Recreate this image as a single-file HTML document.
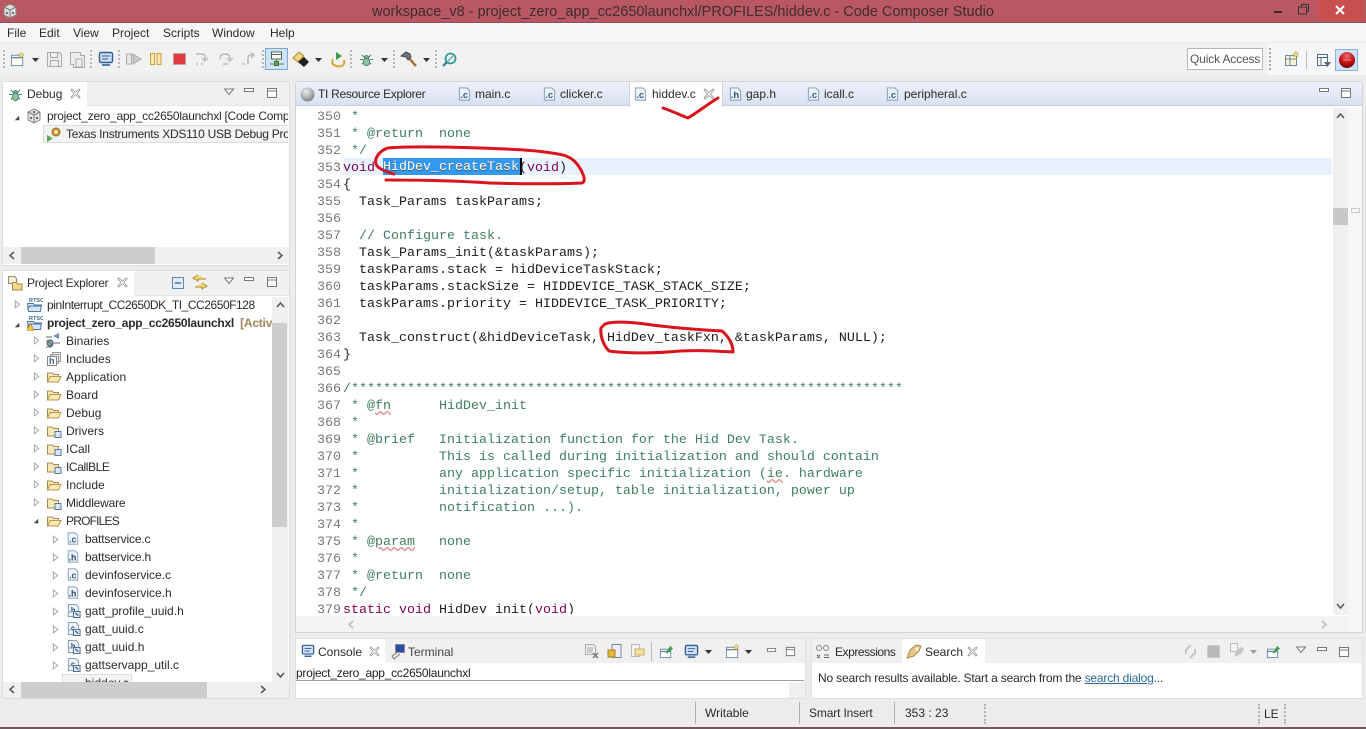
<!DOCTYPE html>
<html><head><meta charset="utf-8"><style>
html,body{margin:0;padding:0;width:1366px;height:729px;overflow:hidden;background:#ececec}
*{box-sizing:border-box}
body{font:12px "Liberation Sans",sans-serif;color:#2b2b2b;position:relative}
.a,.t,svg.i{position:absolute}
.t{white-space:nowrap;line-height:16px}
pre{margin:0;font:13.33px/17px "Liberation Mono",monospace;position:absolute}
.c{color:#3f7f5f}.k{color:#7f0055}
</style></head><body>
<svg width="0" height="0" style="position:absolute"><defs>
<symbol id="folder" viewBox="0 0 16 16"><path d="M1.5 13V4h5l1 1.500h5V8" fill="#f8e8b8" stroke="#a88a50"/><path d="M1.500 13l2.500-5.500h11l-2.500 5.500z" fill="#fbe9b0" stroke="#b89650"/></symbol>
<symbol id="pfolder" viewBox="0 0 16 16"><path d="M1.500 13V4h5l1 1.500h5V13z" fill="#f8e8b8" stroke="#a88a50"/><rect x="9" y="8.500" width="6" height="6" fill="#dbe6f4" stroke="#5a7a9c"/></symbol>
<symbol id="fc" viewBox="0 0 16 16"><path d="M2.500 1.500h8l3 3v10h-11z" fill="#eef3f9" stroke="#7d99b5"/><text x="3.500" y="12.500" font-family="Liberation Sans" font-size="10" font-weight="bold" fill="#2a5a8a">.c</text></symbol>
<symbol id="fh" viewBox="0 0 16 16"><path d="M2.500 1.500h8l3 3v10h-11z" fill="#eef3f9" stroke="#7d99b5"/><text x="3" y="12.500" font-family="Liberation Sans" font-size="10" font-weight="bold" fill="#2a4a7a">.h</text></symbol>
<symbol id="closed" viewBox="0 0 8 10"><path d="M1.500 1l5 4-5 4z" fill="#fff" stroke="#a0a0a0"/></symbol>
<symbol id="open" viewBox="0 0 8 8"><path d="M7 1v6H1z" fill="#444"/></symbol>
<symbol id="x" viewBox="0 0 12 12"><path d="M2 1l4 3.500L10 1l1 1-3.500 4L11 10l-1 1-4-3.500L2 11l-1-1 3.500-4L1 2z" fill="#fff" stroke="#9a9a9a" stroke-width=".9"/></symbol>
<symbol id="min" viewBox="0 0 12 6"><rect x="1.500" y="1.500" width="9" height="3" fill="#fff" stroke="#777"/></symbol>
<symbol id="max" viewBox="0 0 12 12"><path d="M1.500 1.500h9v9h-9zM1.500 4h9" fill="#fff" stroke="#777"/></symbol>
<symbol id="menu" viewBox="0 0 12 8"><path d="M1.500 1h9L6 6.500z" fill="#fff" stroke="#777"/></symbol>
<symbol id="drop" viewBox="0 0 8 4"><path d="M0 0h7L3.500 4z" fill="#333"/></symbol>
<symbol id="bug" viewBox="0 0 16 16"><path d="M3 3l3 3M13 3l-3 3M1 8h3M15 8h-3M3 13l3-2M13 13l-3-2" stroke="#3f7f6f" fill="none"/><circle cx="8" cy="6" r="2.200" fill="#7fb38f" stroke="#3f7f6f"/><ellipse cx="8" cy="10.500" rx="3.500" ry="4" fill="#8fc49f" stroke="#3f7f6f"/></symbol>
<symbol id="link" viewBox="0 0 16 16"><path d="M2.500 1.500h8l3 3v10h-11z" fill="#eef3f9" stroke="#7d99b5"/><text x="3" y="10" font-family="Liberation Sans" font-size="8" font-weight="bold" fill="#2a4a7a">.h</text><rect x="8" y="9" width="7" height="6.500" fill="#dce8f4" stroke="#44688c"/><path d="M10 10.500l3 3" stroke="#224"/></symbol>
<symbol id="linkc" viewBox="0 0 16 16"><path d="M2.500 1.500h8l3 3v10h-11z" fill="#eef3f9" stroke="#7d99b5"/><text x="3" y="10" font-family="Liberation Sans" font-size="8" font-weight="bold" fill="#2a5a8a">.c</text><rect x="8" y="9" width="7" height="6.500" fill="#dce8f4" stroke="#44688c"/><path d="M10 10.500l3 3" stroke="#224"/></symbol>
<symbol id="monitor" viewBox="0 0 16 16"><rect x="1.500" y="1.500" width="13" height="10" rx="1.500" fill="#cfe0f2" stroke="#2f5f97" stroke-width="1.400"/><path d="M4 5h8M4 8h6" stroke="#2f5f97"/><path d="M4 14h8" stroke="#2f5f97" stroke-width="1.600"/></symbol>
<symbol id="newwin" viewBox="0 0 16 16"><rect x="1.500" y="3.500" width="12" height="11" fill="#fff" stroke="#6f8aa8"/><path d="M1.500 6h12" stroke="#6f8aa8" stroke-width="1.500"/><path d="M12 0l1 2 2 .5-1.500 1.500.5 2-2-1-2 1 .5-2L9 2.500l2-.5z" fill="#f5dc7a" stroke="#b39540" stroke-width=".5"/></symbol>
<symbol id="pin" viewBox="0 0 16 16"><rect x="1.500" y="5.500" width="11" height="9" fill="#fff" stroke="#6f8aa8"/><path d="M1.500 8h11" stroke="#6f8aa8" stroke-width="1.500"/><path d="M7 9l3-4 2-3 3 3-3 2-3 3z" fill="#3f9f4f"/></symbol>
</defs></svg>

<!-- Title bar -->
<div class="a" style="left:0;top:0;width:1366px;height:23px;background:#b95863;border-bottom:1px solid #8a5058"></div>
<svg class="i" style="left:2px;top:3px" width="16" height="16" viewBox="0 0 16 16"><path d="M8 1l6 3v8l-6 3-6-3V4z" fill="#ddd" stroke="#888"/><path d="M2 4l6 3 6-3M8 7v8" stroke="#777" fill="none"/><circle cx="5" cy="10" r="1" fill="#555"/><circle cx="11" cy="10" r="1" fill="#555"/></svg>
<div class="t" style="left:372px;top:4px;font-size:14.500px;color:#3f2c30">workspace_v8 - project_zero_app_cc2650launchxl/PROFILES/hiddev.c - Code Composer Studio</div>
<div class="a" style="left:1274px;top:11px;width:8px;height:2px;background:#333"></div>
<svg class="i" style="left:1298px;top:4px" width="12" height="11"><path d="M3.500 2.500V.5h7v7h-2M.5 3h8v7h-8z" fill="none" stroke="#333"/></svg>
<div class="a" style="left:1318px;top:0;width:45px;height:20px;background:#c9504f"></div>
<svg class="i" style="left:1335px;top:5px" width="11" height="10"><path d="M1 1l8 8M9 1l-8 8" stroke="#fff" stroke-width="2"/></svg>

<!-- Menu -->
<div class="a" style="left:0;top:23px;width:1366px;height:20px;background:#f5f6f7;border-bottom:1px solid #ebebeb"></div>
<div class="t" style="left:7px;top:25px">File</div>
<div class="t" style="left:39px;top:25px">Edit</div>
<div class="t" style="left:73px;top:25px">View</div>
<div class="t" style="left:112px;top:25px">Project</div>
<div class="t" style="left:163px;top:25px">Scripts</div>
<div class="t" style="left:212px;top:25px">Window</div>
<div class="t" style="left:270px;top:25px">Help</div>

<!-- Toolbar -->
<div class="a" style="left:0;top:43px;width:1268px;height:32px;background:#f1f1f1"></div>
<div class="a" style="left:1268px;top:43px;width:98px;height:32px;background:#f6f7f8"></div>
<div class="a" style="left:3px;top:50px;height:18px;border-left:2px dotted #b8b8b8"></div>
<svg class="i" style="left:9px;top:52px" width="17" height="15"><use href="#newwin"/></svg>
<svg class="i" style="left:32px;top:58px" width="8" height="4"><use href="#drop"/></svg>
<svg class="i" style="left:47px;top:52px" width="15" height="15"><path d="M.5.5h12l2 2v12H.5zM3.500.5v5h7v-5M3.500 14.500v-6h8v6" fill="#eee" stroke="#aaa"/></svg>
<svg class="i" style="left:70px;top:52px" width="16" height="16"><path d="M.5.5h10v3h4v12h-11v-3h-3z" fill="#eee" stroke="#aaa"/><path d="M6 7h6v8H6z" fill="none" stroke="#aaa"/></svg>
<div class="a" style="left:90px;top:50px;height:18px;border-left:2px dotted #b8b8b8"></div>
<svg class="i" style="left:98px;top:51px" width="16" height="16"><use href="#monitor"/></svg>
<div class="a" style="left:118px;top:50px;height:18px;border-left:2px dotted #b8b8b8"></div>
<svg class="i" style="left:126px;top:53px" width="16" height="12"><path d="M.5 1h5v10h-5z" fill="#e8e8e8" stroke="#aaa"/><path d="M7 1l8 5-8 5z" fill="#c8c8c8" stroke="#aaa"/></svg>
<svg class="i" style="left:150px;top:53px" width="12" height="12"><path d="M.5.5h4v11h-4zM7 .5h4v11H7z" fill="#fbe8a8" stroke="#c8a040"/></svg>
<svg class="i" style="left:173px;top:53px" width="13" height="12"><rect x=".5" y=".5" width="12" height="11" fill="#e03a3e" stroke="#c0a0a0"/></svg>
<svg class="i" style="left:195px;top:52px" width="15" height="14"><path d="M1 2h6q3 0 3 3v3M7 6l3 3 3-3M1 12h2M6 12h2" fill="none" stroke="#bbb" stroke-width="1.500"/></svg>
<svg class="i" style="left:218px;top:52px" width="15" height="14"><path d="M2 7q0-5 5-5t5 5M9 6l3 3 3-3M5 12h5" fill="none" stroke="#bbb" stroke-width="1.500"/></svg>
<svg class="i" style="left:241px;top:52px" width="15" height="14"><path d="M7 12V6q0-3 3-3h2M10 1l3 2-3 3M1 12h3" fill="none" stroke="#bbb" stroke-width="1.500"/></svg>
<div class="a" style="left:262px;top:50px;height:18px;border-left:2px dotted #b8b8b8"></div>
<div class="a" style="left:265px;top:48px;width:23px;height:22px;background:#cfe3f7;border:1px solid #7aa8d8"></div>
<svg class="i" style="left:270px;top:51px" width="14" height="16"><path d="M1.500 1h10v7h-10zM1.500 3.500h10" fill="#fff" stroke="#486a4a"/><path d="M6.500 8v4M0 13h14" stroke="#5a8a4a"/><rect x="4.500" y="10.500" width="4" height="4" fill="#6aa84f" stroke="#3f6f3f"/></svg>
<svg class="i" style="left:292px;top:51px" width="18" height="17"><path d="M1 7l6-6 5 4-6 6z" fill="#f4d67a" stroke="#a88a30"/><path d="M6 11l6-5 5 5-5 5z" fill="#222"/></svg>
<svg class="i" style="left:315px;top:58px" width="8" height="4"><use href="#drop"/></svg>
<svg class="i" style="left:330px;top:51px" width="16" height="18"><path d="M6 1l6 4-6 4z" fill="#3f9f4f"/><path d="M3 8q-2 4 1 6t8 1q3-2 2-6" fill="none" stroke="#d8a838" stroke-width="2"/></svg>
<div class="a" style="left:350px;top:50px;height:18px;border-left:2px dotted #b8b8b8"></div>
<svg class="i" style="left:359px;top:52px" width="15" height="15"><use href="#bug"/></svg>
<svg class="i" style="left:381px;top:58px" width="8" height="4"><use href="#drop"/></svg>
<div class="a" style="left:393px;top:50px;height:18px;border-left:2px dotted #b8b8b8"></div>
<svg class="i" style="left:400px;top:51px" width="17" height="16"><path d="M8 6l8 9" stroke="#a8763a" stroke-width="2.500"/><path d="M1 5l5-4 4 2 1 3-3 3-2-3z" fill="#6a7a88" stroke="#445"/></svg>
<svg class="i" style="left:423px;top:58px" width="8" height="4"><use href="#drop"/></svg>
<div class="a" style="left:435px;top:50px;height:18px;border-left:2px dotted #b8b8b8"></div>
<svg class="i" style="left:442px;top:52px" width="15" height="15"><circle cx="8.500" cy="6.500" r="5" fill="none" stroke="#2f9a9a" stroke-width="1.800"/><path d="M5 10l-4 4" stroke="#2f7f9a" stroke-width="2.200"/><path d="M6 9l5-5" stroke="#2f9a9a"/></svg>

<div class="a" style="left:1187px;top:48px;width:76px;height:22px;background:#fff;border:1px solid #b5b5b5"></div>
<div class="t" style="left:1190px;top:51px;color:#555;letter-spacing:-.15px">Quick Access</div>
<div class="a" style="left:1269px;top:48px;height:22px;border-left:2px dotted #a8a8a8"></div>
<svg class="i" style="left:1284px;top:51px" width="16" height="16"><path d="M1.500 4.500h11v10h-11zM1.500 8h11M6 4.500v10" fill="#f8f4d8" stroke="#6f8aa0"/><path d="M12 0l1 2 2 .5-1.500 1.500.5 2-2-1-2 1 .5-2L9 2.500l2-.5z" fill="#f5dc7a" stroke="#b39540" stroke-width=".5"/></svg>
<div class="a" style="left:1306px;top:51px;height:18px;border-left:1px solid #bbb"></div>
<svg class="i" style="left:1316px;top:53px" width="16" height="15"><path d="M1.500 1.500h10v11h-10zM1.500 4.500h10M5 4.500v8" fill="#fff" stroke="#4a6a86"/><path d="M8 9h7l-3.500 5z" fill="#666"/></svg>
<div class="a" style="left:1335px;top:49px;width:23px;height:22px;background:#cde2f6;border:1px solid #8ab0d8"></div>
<svg class="i" style="left:1339px;top:52px" width="16" height="16"><defs><radialGradient id="rg" cx=".5" cy=".25" r=".8"><stop offset="0" stop-color="#ee6a6a"/><stop offset=".6" stop-color="#c00c10"/><stop offset="1" stop-color="#5a0508"/></radialGradient></defs><circle cx="8" cy="8" r="8" fill="url(#rg)"/><path d="M4 8h8" stroke="#e8a0a0" stroke-width=".8"/></svg>

<!-- Debug panel -->
<div class="a" style="left:2px;top:81px;width:288px;height:185px;background:#fff;border:1px solid #dcdcdc;border-radius:3px 3px 0 0"></div>
<div class="a" style="left:3px;top:82px;width:286px;height:24px;background:#f0f0f0;border-bottom:1px solid #e4e4e4"></div>
<div class="a" style="left:3px;top:82px;width:84px;height:25px;background:#fff"></div>
<svg class="i" style="left:8px;top:87px" width="15" height="15"><use href="#bug"/></svg>
<div class="t" style="left:27px;top:86px">Debug</div>
<svg class="i" style="left:70px;top:88px" width="11" height="11"><use href="#x"/></svg>
<svg class="i" style="left:223px;top:88px" width="12" height="8"><use href="#menu"/></svg>
<svg class="i" style="left:243px;top:87px" width="12" height="6"><use href="#min"/></svg>
<svg class="i" style="left:266px;top:87px" width="12" height="12"><use href="#max"/></svg>
<svg class="i" style="left:14px;top:115px" width="6" height="6"><use href="#open"/></svg>
<svg class="i" style="left:26px;top:108px" width="16" height="16"><path d="M8 1l6 3v8l-6 3-6-3V4z" fill="#e4e4e4" stroke="#8a8a8a"/><path d="M2 4l6 3 6-3M8 7v8" stroke="#777" fill="none"/><circle cx="5" cy="10" r="1" fill="#444"/><circle cx="11" cy="10" r="1" fill="#444"/><circle cx="8" cy="4" r="1" fill="#444"/></svg>
<div class="t" style="left:47px;top:108px;width:241px;overflow:hidden;letter-spacing:-.25px">project_zero_app_cc2650launchxl [Code Composer Studio - Device Debugging]</div>
<div class="a" style="left:43px;top:125px;width:245px;height:18px;background:#f3f3f3;border:1px solid #dcdcdc;border-right:0"></div>
<svg class="i" style="left:46px;top:127px" width="16" height="15"><path d="M1 8l6 3.500-6 3.500z" fill="#5aa85a"/><circle cx="10" cy="5" r="4" fill="#d8a038" stroke="#8a6a20"/><circle cx="10" cy="5" r="1.500" fill="#fff"/></svg>
<div class="t" style="left:66px;top:126px;width:222px;overflow:hidden;letter-spacing:-.25px">Texas Instruments XDS110 USB Debug Probe/Cortex_M3</div>
<div class="a" style="left:3px;top:247px;width:286px;height:17px;background:#f0f0f0"></div>
<div class="a" style="left:21px;top:247px;width:134px;height:17px;background:#cdcdcd"></div>
<svg class="i" style="left:9px;top:251px" width="6" height="9"><path d="M5 1L1 4.500 5 8" fill="none" stroke="#555" stroke-width="1.500"/></svg>
<svg class="i" style="left:277px;top:251px" width="6" height="9"><path d="M1 1l4 3.500L1 8" fill="none" stroke="#555" stroke-width="1.500"/></svg>

<!-- Project Explorer -->
<div class="a" style="left:2px;top:270px;width:288px;height:429px;background:#fff;border:1px solid #dcdcdc;border-radius:3px 3px 0 0"></div>
<div class="a" style="left:3px;top:271px;width:286px;height:25px;background:#f0f0f0;border-bottom:1px solid #e4e4e4"></div>
<div class="a" style="left:3px;top:271px;width:131px;height:26px;background:#fff"></div>
<svg class="i" style="left:7px;top:275px" width="16" height="16"><path d="M1.500 1.500h6l2 2v5h-8z" fill="#f4efe0" stroke="#9a8a60"/><path d="M5.500 7.500h4l1 1.500h4.500v6h-9.500z" fill="#f4d88a" stroke="#a88a40"/></svg>
<div class="t" style="left:27px;top:275px;letter-spacing:-.25px">Project Explorer</div>
<svg class="i" style="left:117px;top:277px" width="11" height="11"><use href="#x"/></svg>
<svg class="i" style="left:171px;top:276px" width="14" height="14"><rect x="1.500" y="1.500" width="11" height="11" fill="#e0ebf6" stroke="#5d89b5"/><path d="M4 7h6" stroke="#44688c" stroke-width="1.400"/></svg>
<svg class="i" style="left:192px;top:274px" width="16" height="16"><path d="M6 1L1 4l5 3V5h8M10 9l5 3-5 3v-2H3" fill="#f6d878" stroke="#b08a30"/></svg>
<svg class="i" style="left:223px;top:277px" width="12" height="8"><use href="#menu"/></svg>
<svg class="i" style="left:243px;top:276px" width="12" height="6"><use href="#min"/></svg>
<svg class="i" style="left:266px;top:276px" width="12" height="12"><use href="#max"/></svg>

<div class="a" style="left:3px;top:297px;width:269px;height:385px;overflow:hidden">
<div class="a" style="left:-3px;top:-297px;width:272px;height:682px">
<svg class="i" style="left:14px;top:300px" width="7" height="9"><use href="#closed"/></svg>
<svg class="i" style="left:26px;top:297px" width="17" height="16"><path d="M1.500 6.500h6l1 1.500h7l-1 6.500H2.500z" fill="#d8e4f2" stroke="#4a78a8"/><path d="M1.500 13l2-4h12" fill="#cfe0f0" stroke="#4a78a8"/><text x="3" y="5" font-size="5.500" font-weight="bold" font-family="Liberation Sans" fill="#44688c">RTSC</text></svg>
<div class="t" style="left:47px;top:297px;letter-spacing:-.45px">pinInterrupt_CC2650DK_TI_CC2650F128</div>
<svg class="i" style="left:14px;top:322px" width="6" height="6"><use href="#open"/></svg>
<svg class="i" style="left:26px;top:315px" width="17" height="16"><path d="M1.500 6.500h6l1 1.500h7l-1 6.500H2.500z" fill="#d8e4f2" stroke="#4a78a8"/><path d="M1.500 13l2-4h12" fill="#cfe0f0" stroke="#4a78a8"/><text x="3" y="5" font-size="5.500" font-weight="bold" font-family="Liberation Sans" fill="#44688c">RTSC</text><path d="M1 15.500L4.500 8.500 8 15.500z" fill="#f6c830" stroke="#a88020" stroke-width=".6"/></svg>
<div class="t" style="left:47px;top:315px;font-weight:bold;letter-spacing:-.25px">project_zero_app_cc2650launchxl <span style="color:#a0885a">&nbsp;[Active - Flash]</span></div>

<svg class="i" style="left:33px;top:336px" width="7" height="9"><use href="#closed"/></svg>
<svg class="i" style="left:45px;top:332px" width="17" height="17"><path d="M8 4l6-3v6z" fill="#6a92c0"/><circle cx="5" cy="11" r="3" fill="#8aa" stroke="#455"/><path d="M1 5h6M1 15h6M8 11h7M2 8l6 6" stroke="#5a6a78"/></svg>
<div class="t" style="left:66px;top:333px">Binaries</div>
<svg class="i" style="left:33px;top:354px" width="7" height="9"><use href="#closed"/></svg>
<svg class="i" style="left:46px;top:351px" width="16" height="16"><path d="M6.500 1.500h8v9h-8zM4.500 3.500h8v9h-8z" fill="#eee" stroke="#999"/><rect x="1.500" y="5.500" width="9" height="9" fill="#fff" stroke="#888"/><text x="3" y="13" font-size="9" font-weight="bold" font-family="Liberation Sans" fill="#3a5f7f">h</text></svg>
<div class="t" style="left:66px;top:351px">Includes</div>
<svg class="i" style="left:33px;top:372px" width="7" height="9"><use href="#closed"/></svg><svg class="i" style="left:46px;top:369px" width="16" height="16"><use href="#folder"/></svg><div class="t" style="left:66px;top:369px;letter-spacing:.15px">Application</div>
<svg class="i" style="left:33px;top:390px" width="7" height="9"><use href="#closed"/></svg><svg class="i" style="left:46px;top:387px" width="16" height="16"><use href="#folder"/></svg><div class="t" style="left:66px;top:387px">Board</div>
<svg class="i" style="left:33px;top:408px" width="7" height="9"><use href="#closed"/></svg><svg class="i" style="left:46px;top:405px" width="16" height="16"><use href="#folder"/></svg><div class="t" style="left:66px;top:405px">Debug</div>
<svg class="i" style="left:33px;top:426px" width="7" height="9"><use href="#closed"/></svg><svg class="i" style="left:46px;top:423px" width="16" height="16"><use href="#pfolder"/></svg><div class="t" style="left:66px;top:423px">Drivers</div>
<svg class="i" style="left:33px;top:444px" width="7" height="9"><use href="#closed"/></svg><svg class="i" style="left:46px;top:441px" width="16" height="16"><use href="#pfolder"/></svg><div class="t" style="left:66px;top:441px">ICall</div>
<svg class="i" style="left:33px;top:462px" width="7" height="9"><use href="#closed"/></svg><svg class="i" style="left:46px;top:459px" width="16" height="16"><use href="#pfolder"/></svg><div class="t" style="left:66px;top:459px;letter-spacing:-.4px">ICallBLE</div>
<svg class="i" style="left:33px;top:480px" width="7" height="9"><use href="#closed"/></svg><svg class="i" style="left:46px;top:477px" width="16" height="16"><use href="#folder"/></svg><div class="t" style="left:66px;top:477px">Include</div>
<svg class="i" style="left:33px;top:498px" width="7" height="9"><use href="#closed"/></svg><svg class="i" style="left:46px;top:495px" width="16" height="16"><use href="#pfolder"/></svg><div class="t" style="left:66px;top:495px;letter-spacing:-.2px">Middleware</div>
<svg class="i" style="left:33px;top:518px" width="6" height="6"><use href="#open"/></svg><svg class="i" style="left:46px;top:513px" width="16" height="16"><use href="#folder"/></svg><div class="t" style="left:66px;top:513px;letter-spacing:-.8px">PROFILES</div>

<svg class="i" style="left:52px;top:535px" width="7" height="9"><use href="#closed"/></svg><svg class="i" style="left:66px;top:531px" width="14" height="15"><use href="#fc"/></svg><div class="t" style="left:85px;top:531px;letter-spacing:-.15px">battservice.c</div>
<svg class="i" style="left:52px;top:553px" width="7" height="9"><use href="#closed"/></svg><svg class="i" style="left:66px;top:549px" width="14" height="15"><use href="#fh"/></svg><div class="t" style="left:85px;top:549px;letter-spacing:-.15px">battservice.h</div>
<svg class="i" style="left:52px;top:571px" width="7" height="9"><use href="#closed"/></svg><svg class="i" style="left:66px;top:567px" width="14" height="15"><use href="#fc"/></svg><div class="t" style="left:85px;top:567px">devinfoservice.c</div>
<svg class="i" style="left:52px;top:589px" width="7" height="9"><use href="#closed"/></svg><svg class="i" style="left:66px;top:585px" width="14" height="15"><use href="#fh"/></svg><div class="t" style="left:85px;top:585px">devinfoservice.h</div>
<svg class="i" style="left:52px;top:607px" width="7" height="9"><use href="#closed"/></svg><svg class="i" style="left:66px;top:603px" width="15" height="15"><use href="#link"/></svg><div class="t" style="left:85px;top:603px">gatt_profile_uuid.h</div>
<svg class="i" style="left:52px;top:625px" width="7" height="9"><use href="#closed"/></svg><svg class="i" style="left:66px;top:621px" width="15" height="15"><use href="#linkc"/></svg><div class="t" style="left:85px;top:621px">gatt_uuid.c</div>
<svg class="i" style="left:52px;top:643px" width="7" height="9"><use href="#closed"/></svg><svg class="i" style="left:66px;top:639px" width="15" height="15"><use href="#link"/></svg><div class="t" style="left:85px;top:639px">gatt_uuid.h</div>
<svg class="i" style="left:52px;top:661px" width="7" height="9"><use href="#closed"/></svg><svg class="i" style="left:66px;top:657px" width="15" height="15"><use href="#linkc"/></svg><div class="t" style="left:85px;top:657px">gattservapp_util.c</div>
<div class="a" style="left:62px;top:674px;width:70px;height:8px;background:#f4f4f4;border:1px solid #dcdcdc;border-bottom:0"></div>
<div class="t" style="left:85px;top:675px;height:7px;overflow:hidden">hiddev.c</div>
</div></div>
<!-- tree scrollbars -->
<div class="a" style="left:272px;top:297px;width:16px;height:385px;background:#f0f0f0"></div>
<div class="a" style="left:272px;top:323px;width:15px;height:204px;background:#cdcdcd"></div>
<svg class="i" style="left:276px;top:302px" width="9" height="6"><path d="M1 5l3.500-4L8 5" fill="none" stroke="#555" stroke-width="1.500"/></svg>
<svg class="i" style="left:276px;top:672px" width="9" height="6"><path d="M1 1l3.500 4L8 1" fill="none" stroke="#555" stroke-width="1.500"/></svg>
<div class="a" style="left:3px;top:682px;width:286px;height:16px;background:#f0f0f0"></div>
<div class="a" style="left:21px;top:682px;width:186px;height:16px;background:#cdcdcd"></div>
<svg class="i" style="left:9px;top:685px" width="6" height="9"><path d="M5 1L1 4.500 5 8" fill="none" stroke="#555" stroke-width="1.500"/></svg>
<svg class="i" style="left:260px;top:685px" width="6" height="9"><path d="M1 1l4 3.500L1 8" fill="none" stroke="#555" stroke-width="1.500"/></svg>

<!-- Editor panel -->
<div class="a" style="left:295px;top:81px;width:1068px;height:552px;background:#fff;border:1px solid #d4d4d4;border-radius:3px 3px 0 0"></div>
<div class="a" style="left:296px;top:82px;width:1066px;height:24px;background:linear-gradient(#eef1f9,#d9e1f2);border-bottom:1px solid #c6cfe0"></div>
<div class="a" style="left:629px;top:82px;width:94px;height:25px;background:#fff;border-left:1px solid #d4d4d4;border-right:1px solid #d4d4d4"></div>
<svg class="i" style="left:300px;top:87px" width="15" height="15"><defs><radialGradient id="gl" cx=".4" cy=".3" r=".8"><stop offset="0" stop-color="#eee"/><stop offset="1" stop-color="#777"/></radialGradient></defs><circle cx="7.500" cy="7.500" r="7" fill="url(#gl)"/></svg>
<div class="t" style="left:318px;top:86px;letter-spacing:-.3px">TI Resource Explorer</div>
<svg class="i" style="left:457px;top:86px" width="15" height="16"><use href="#fc"/></svg><div class="t" style="left:475px;top:86px">main.c</div>
<svg class="i" style="left:542px;top:86px" width="15" height="16"><use href="#fc"/></svg><div class="t" style="left:560px;top:86px">clicker.c</div>
<svg class="i" style="left:633px;top:86px" width="15" height="16"><use href="#fc"/></svg><div class="t" style="left:652px;top:86px">hiddev.c</div>
<svg class="i" style="left:703px;top:88px" width="12" height="12"><use href="#x"/></svg>
<svg class="i" style="left:728px;top:86px" width="15" height="16"><use href="#fh"/></svg><div class="t" style="left:746px;top:86px">gap.h</div>
<svg class="i" style="left:806px;top:86px" width="15" height="16"><use href="#fc"/></svg><div class="t" style="left:824px;top:86px">icall.c</div>
<svg class="i" style="left:885px;top:86px" width="15" height="16"><use href="#fc"/></svg><div class="t" style="left:904px;top:86px">peripheral.c</div>
<svg class="i" style="left:1318px;top:87px" width="12" height="6"><use href="#min"/></svg>
<svg class="i" style="left:1340px;top:87px" width="12" height="12"><use href="#max"/></svg>

<div class="a" style="left:343px;top:158px;width:989px;height:17px;background:#e8f2fe"></div>
<div class="a" style="left:383px;top:158px;width:137px;height:17px;background:#3399ee"></div>
<div class="a" style="left:520px;top:158px;width:1.500px;height:17px;background:#000"></div>
<div class="a" style="left:296px;top:107px;width:1037px;height:507px;overflow:hidden">
<pre style="left:21px;top:2px;color:#787878">350
351
352
353
354
355
356
357
358
359
360
361
362
363
364
365
366
367
368
369
370
371
372
373
374
375
376
377
378
379</pre>
<pre style="left:47px;top:2px;color:#1c1c1c"><span class="c"> *
 * @return  none
 */</span>
<span class="k">void</span> <span style="color:#555">HidDev_createTask</span>(<span class="k">void</span>)
{
  Task_Params taskParams;

  <span class="c">// Configure task.</span>
  Task_Params_init(&amp;taskParams);
  taskParams.stack = hidDeviceTaskStack;
  taskParams.stackSize = HIDDEVICE_TASK_STACK_SIZE;
  taskParams.priority = HIDDEVICE_TASK_PRIORITY;

  Task_construct(&amp;hidDeviceTask, HidDev_taskFxn, &amp;taskParams, NULL);
}

<span class="c">/*********************************************************************
 * @<span style="text-decoration:underline wavy #d88">fn</span>      HidDev_init
 *
 * @brief   Initialization function for the Hid Dev Task.
 *          This is called during initialization and should contain
 *          any application specific initialization (<span style="text-decoration:underline wavy #d88">ie</span>. hardware
 *          initialization/setup, table initialization, power up
 *          notification ...).
 *
 * @<span style="text-decoration:underline wavy #d88">param</span>   none
 *
 * @return  none
 */</span>
<span class="k">static</span> <span class="k">void</span> HidDev_init(<span class="k">void</span>)</pre>
</div>
<pre style="left:383px;top:159px;color:#fff;width:137px;overflow:hidden;height:16px">HidDev_createTask</pre>
<!-- editor scrollbars -->
<div class="a" style="left:1333px;top:108px;width:15px;height:507px;background:#f0f0f0"></div>
<div class="a" style="left:1333px;top:208px;width:15px;height:17px;background:#c8c8c8"></div>
<svg class="i" style="left:1336px;top:113px" width="9" height="6"><path d="M1 5l3.500-4L8 5" fill="none" stroke="#555" stroke-width="1.500"/></svg>
<svg class="i" style="left:1336px;top:603px" width="9" height="6"><path d="M1 1l3.500 4L8 1" fill="none" stroke="#555" stroke-width="1.500"/></svg>
<div class="a" style="left:1348px;top:108px;width:14px;height:524px;background:#f6f6f6"></div>
<div class="a" style="left:1351px;top:208px;width:9px;height:5px;background:#f4f4f4;border:1px solid #ccc"></div>
<div class="a" style="left:296px;top:616px;width:1052px;height:16px;background:#f4f4f4"></div>
<svg class="i" style="left:348px;top:620px" width="6" height="9"><path d="M5 1L1 4.500 5 8" fill="none" stroke="#bbb" stroke-width="1.500"/></svg>
<svg class="i" style="left:1321px;top:620px" width="6" height="9"><path d="M1 1l4 3.500L1 8" fill="none" stroke="#bbb" stroke-width="1.500"/></svg>

<!-- Annotations -->
<svg class="a" style="left:0;top:0" width="1366" height="729" fill="none" stroke="#d8141c" stroke-linecap="round" stroke-linejoin="round">
<path stroke-width="3" d="M394 174C385 171 378 169 376 164C374 157 381 150 388 148C410 146 450 147 480 148C510 149 540 150 563 155C573 158 577 163 581 170C584 176 586 181 582 183C560 184 520 184 490 183C460 181 430 180 386 180"/>
<path stroke-width="3" d="M663 108C672 111 680 115 688 118C698 112 708 104 718 98"/>
<path stroke-width="3" d="M605 324C612 321 630 322 645 324C665 327 700 330 722 331C730 338 733 345 733 352C715 351 700 350 680 351C660 353 630 354 609 351C603 345 600 335 601 328Z"/>
</svg>

<!-- Console -->
<div class="a" style="left:295px;top:638px;width:511px;height:61px;background:#fff;border:1px solid #e0e0e0"></div>
<div class="a" style="left:296px;top:639px;width:509px;height:24px;background:#f0f0f0"></div>
<div class="a" style="left:296px;top:639px;width:89px;height:25px;background:#fff"></div>
<svg class="i" style="left:301px;top:644px" width="14" height="14"><use href="#monitor"/></svg>
<div class="t" style="left:318px;top:644px">Console</div>
<svg class="i" style="left:369px;top:646px" width="11" height="11"><use href="#x"/></svg>
<svg class="i" style="left:390px;top:644px" width="16" height="16"><rect x="5.500" y=".5" width="9" height="8" fill="#2a4aa8" stroke="#889"/><path d="M8 8l-6 4 2 3 6-5" fill="#eee" stroke="#777"/></svg>
<div class="t" style="left:408px;top:644px;color:#444">Terminal</div>
<svg class="i" style="left:584px;top:644px" width="15" height="15"><path d="M1.500.5h8l2 2v8h-10zM3 4h6M3 6h6M3 8h5" fill="#eee" stroke="#aaa"/><path d="M9 9l5 5M14 9l-5 5" stroke="#777" stroke-width="1.500"/></svg>
<svg class="i" style="left:607px;top:644px" width="15" height="15"><path d="M5 .5h9v13H5z" fill="#eef" stroke="#789"/><rect x="1" y="6" width="7" height="7" fill="#e8b830" stroke="#a88020"/></svg>
<svg class="i" style="left:630px;top:644px" width="15" height="15"><path d="M1.500.5h8v12h-8z" fill="#f4f4f4" stroke="#bbb"/><path d="M5 5h9v6H5z" fill="#f4e4a4" stroke="#c8b060"/></svg>
<div class="a" style="left:651px;top:642px;height:19px;border-left:1px solid #bbb"></div>
<svg class="i" style="left:659px;top:644px" width="15" height="15"><use href="#pin"/></svg>
<svg class="i" style="left:684px;top:644px" width="15" height="15"><use href="#monitor"/></svg>
<svg class="i" style="left:705px;top:650px" width="8" height="4"><use href="#drop"/></svg>
<svg class="i" style="left:725px;top:644px" width="15" height="15"><use href="#newwin"/></svg>
<svg class="i" style="left:745px;top:650px" width="8" height="4"><use href="#drop"/></svg>
<svg class="i" style="left:766px;top:647px" width="11" height="6"><use href="#min"/></svg>
<svg class="i" style="left:785px;top:646px" width="11" height="11"><use href="#max"/></svg>
<div class="t" style="left:296px;top:665px;color:#222;letter-spacing:-.25px">project_zero_app_cc2650launchxl</div>
<div class="a" style="left:296px;top:680px;width:508px;height:1px;background:#a0a0a0"></div>
<div class="a" style="left:789px;top:682px;width:16px;height:16px;background:#f0f0f0"></div>

<!-- Search -->
<div class="a" style="left:811px;top:638px;width:552px;height:61px;background:#fff;border:1px solid #e0e0e0"></div>
<div class="a" style="left:812px;top:639px;width:550px;height:24px;background:#f0f0f0"></div>
<div class="a" style="left:902px;top:639px;width:83px;height:25px;background:#fff"></div>
<svg class="i" style="left:815px;top:644px" width="16" height="15"><circle cx="4" cy="4" r="2.500" fill="none" stroke="#7a8a8a"/><circle cx="11" cy="4" r="2.500" fill="none" stroke="#7a8a8a"/><path d="M2 11l3 3M5 11l-3 3M9 11h5M9 13.500h5" stroke="#666"/></svg>
<div class="t" style="left:835px;top:644px;letter-spacing:-.45px">Expressions</div>
<svg class="i" style="left:906px;top:644px" width="16" height="15"><path d="M1 14l3-8 6-5 5 1-2 5-5 5z" fill="#e8c88a" stroke="#a88a50"/><circle cx="11" cy="5" r="1.500" fill="#fff"/></svg>
<div class="t" style="left:925px;top:644px">Search</div>
<svg class="i" style="left:967px;top:646px" width="11" height="11"><use href="#x"/></svg>
<svg class="i" style="left:1183px;top:644px" width="15" height="15"><path d="M3 10V6l5-5M12 5v4l-5 5" fill="none" stroke="#c4c4c4" stroke-width="2"/></svg>
<svg class="i" style="left:1207px;top:645px" width="13" height="13"><rect x=".5" y=".5" width="12" height="12" fill="#b8b8b8" stroke="#ccc"/></svg>
<svg class="i" style="left:1229px;top:643px" width="16" height="16"><path d="M1.500.5h7v8h-7z" fill="#f4f4f4" stroke="#bbb"/><path d="M5 14l2-6 5-4 3 2-3 5z" fill="#c4c4c4"/></svg>
<svg class="i" style="left:1250px;top:650px" width="7" height="4"><path d="M0 0h7L3.500 4z" fill="#999"/></svg>
<svg class="i" style="left:1266px;top:644px" width="15" height="15"><use href="#pin"/></svg>
<svg class="i" style="left:1295px;top:646px" width="12" height="8"><use href="#menu"/></svg>
<svg class="i" style="left:1316px;top:646px" width="12" height="6"><use href="#min"/></svg>
<svg class="i" style="left:1338px;top:646px" width="12" height="12"><use href="#max"/></svg>
<div class="t" style="left:818px;top:670px;letter-spacing:-.18px">No search results available. Start a search from the <span style="color:#2a6a9a;text-decoration:underline">search dialog</span>...</div>

<!-- Status bar -->
<div class="a" style="left:0;top:699px;width:1366px;height:28px;background:#ececec"></div>
<div class="a" style="left:0;top:727px;width:1366px;height:2px;background:#6f5a5e"></div>
<div class="a" style="left:695px;top:702px;height:22px;border-left:1px solid #b0b0b0"></div>
<div class="t" style="left:705px;top:705px">Writable</div>
<div class="a" style="left:799px;top:702px;height:22px;border-left:1px solid #b0b0b0"></div>
<div class="t" style="left:809px;top:705px;letter-spacing:-.15px">Smart Insert</div>
<div class="a" style="left:894px;top:702px;height:22px;border-left:1px solid #b0b0b0"></div>
<div class="t" style="left:905px;top:705px">353 : 23</div>
<div class="a" style="left:984px;top:704px;height:20px;border-left:2px dotted #b0b0b0"></div>
<div class="a" style="left:1284px;top:704px;height:20px;border-left:2px dotted #b0b0b0"></div>
<div class="a" style="left:1258px;top:704px;height:20px;border-left:2px dotted #b0b0b0"></div>
<div class="t" style="left:1264px;top:706px">LE</div>
</body></html>
